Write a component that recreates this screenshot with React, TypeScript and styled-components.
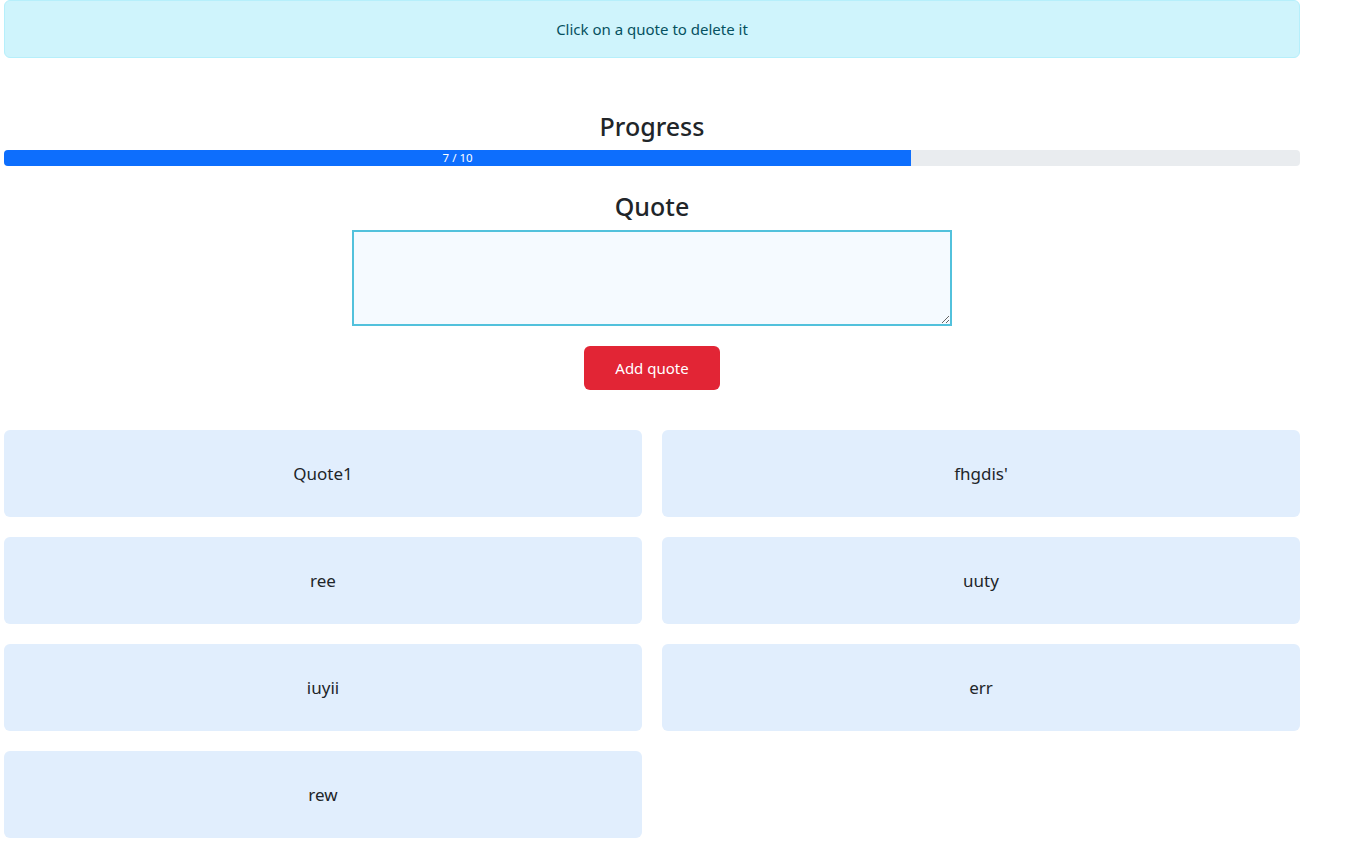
import React from "react";
import styled, { createGlobalStyle } from "styled-components";

const Global = createGlobalStyle`
  * { box-sizing: border-box; }
  body {
    margin: 0;
    background: #fff;
    font-family: "Noto Sans", "Open Sans", "Liberation Sans", sans-serif;
    color: #212529;
  }
`;

const Page = styled.div`
  width: 1296px;
  margin-left: 4px;
  display: flex;
  flex-direction: column;
`;

const Alert = styled.div`
  height: 58px;
  display: flex;
  align-items: center;
  justify-content: center;
  background: #cff4fc;
  border: 1px solid #b6effb;
  border-radius: 6px;
  color: #055160;
  font-size: 15px;
`;

const Heading = styled.h3<{ $top: number }>`
  margin: ${(p) => p.$top}px 0 6px;
  font-size: 25px;
  font-weight: 500;
  line-height: 36px;
  text-align: center;
  color: #212529;
`;

const Track = styled.div`
  height: 16px;
  background: #e9ecef;
  border-radius: 4px;
  overflow: hidden;
  display: flex;
`;

const Fill = styled.div`
  height: 100%;
  background: #0d6efd;
  color: #fff;
  font-size: 11.5px;
  line-height: 16px;
  text-align: center;
`;

const Form = styled.div`
  display: flex;
  flex-direction: column;
  align-items: center;
`;

const TextArea = styled.textarea`
  width: 600px;
  height: 96px;
  border: 2px solid #52c1dc;
  background: #f5faff;
  outline: none;
  font-family: inherit;
  font-size: 16px;
  margin: 0;
  display: block;
`;

const Button = styled.button`
  margin-top: 20px;
  width: 136px;
  height: 44px;
  border: none;
  border-radius: 6px;
  background: #e22535;
  color: #fff;
  font-family: inherit;
  font-size: 15px;
  cursor: pointer;
`;

const Grid = styled.div`
  margin-top: 40px;
  display: grid;
  grid-template-columns: 1fr 1fr;
  gap: 20px;
`;

const Card = styled.div`
  height: 87px;
  background: #e1eefd;
  border-radius: 6px;
  display: flex;
  align-items: center;
  justify-content: center;
  font-size: 17px;
  color: #212529;
  cursor: pointer;
`;

const quotes = ["Quote1", "fhgdis'", "ree", "uuty", "iuyii", "err", "rew"];

export default function App() {
  const done = 7;
  const total = 10;
  return (
    <Page>
      <Global />
      <Alert>Click on a quote to delete it</Alert>
      <Heading $top={50}>Progress</Heading>
      <Track>
        <Fill style={{ width: `${(done / total) * 100}%` }}>
          {done} / {total}
        </Fill>
      </Track>
      <Heading $top={22}>Quote</Heading>
      <Form>
        <TextArea />
        <Button>Add quote</Button>
      </Form>
      <Grid>
        {quotes.map((q) => (
          <Card key={q}>{q}</Card>
        ))}
      </Grid>
    </Page>
  );
}
